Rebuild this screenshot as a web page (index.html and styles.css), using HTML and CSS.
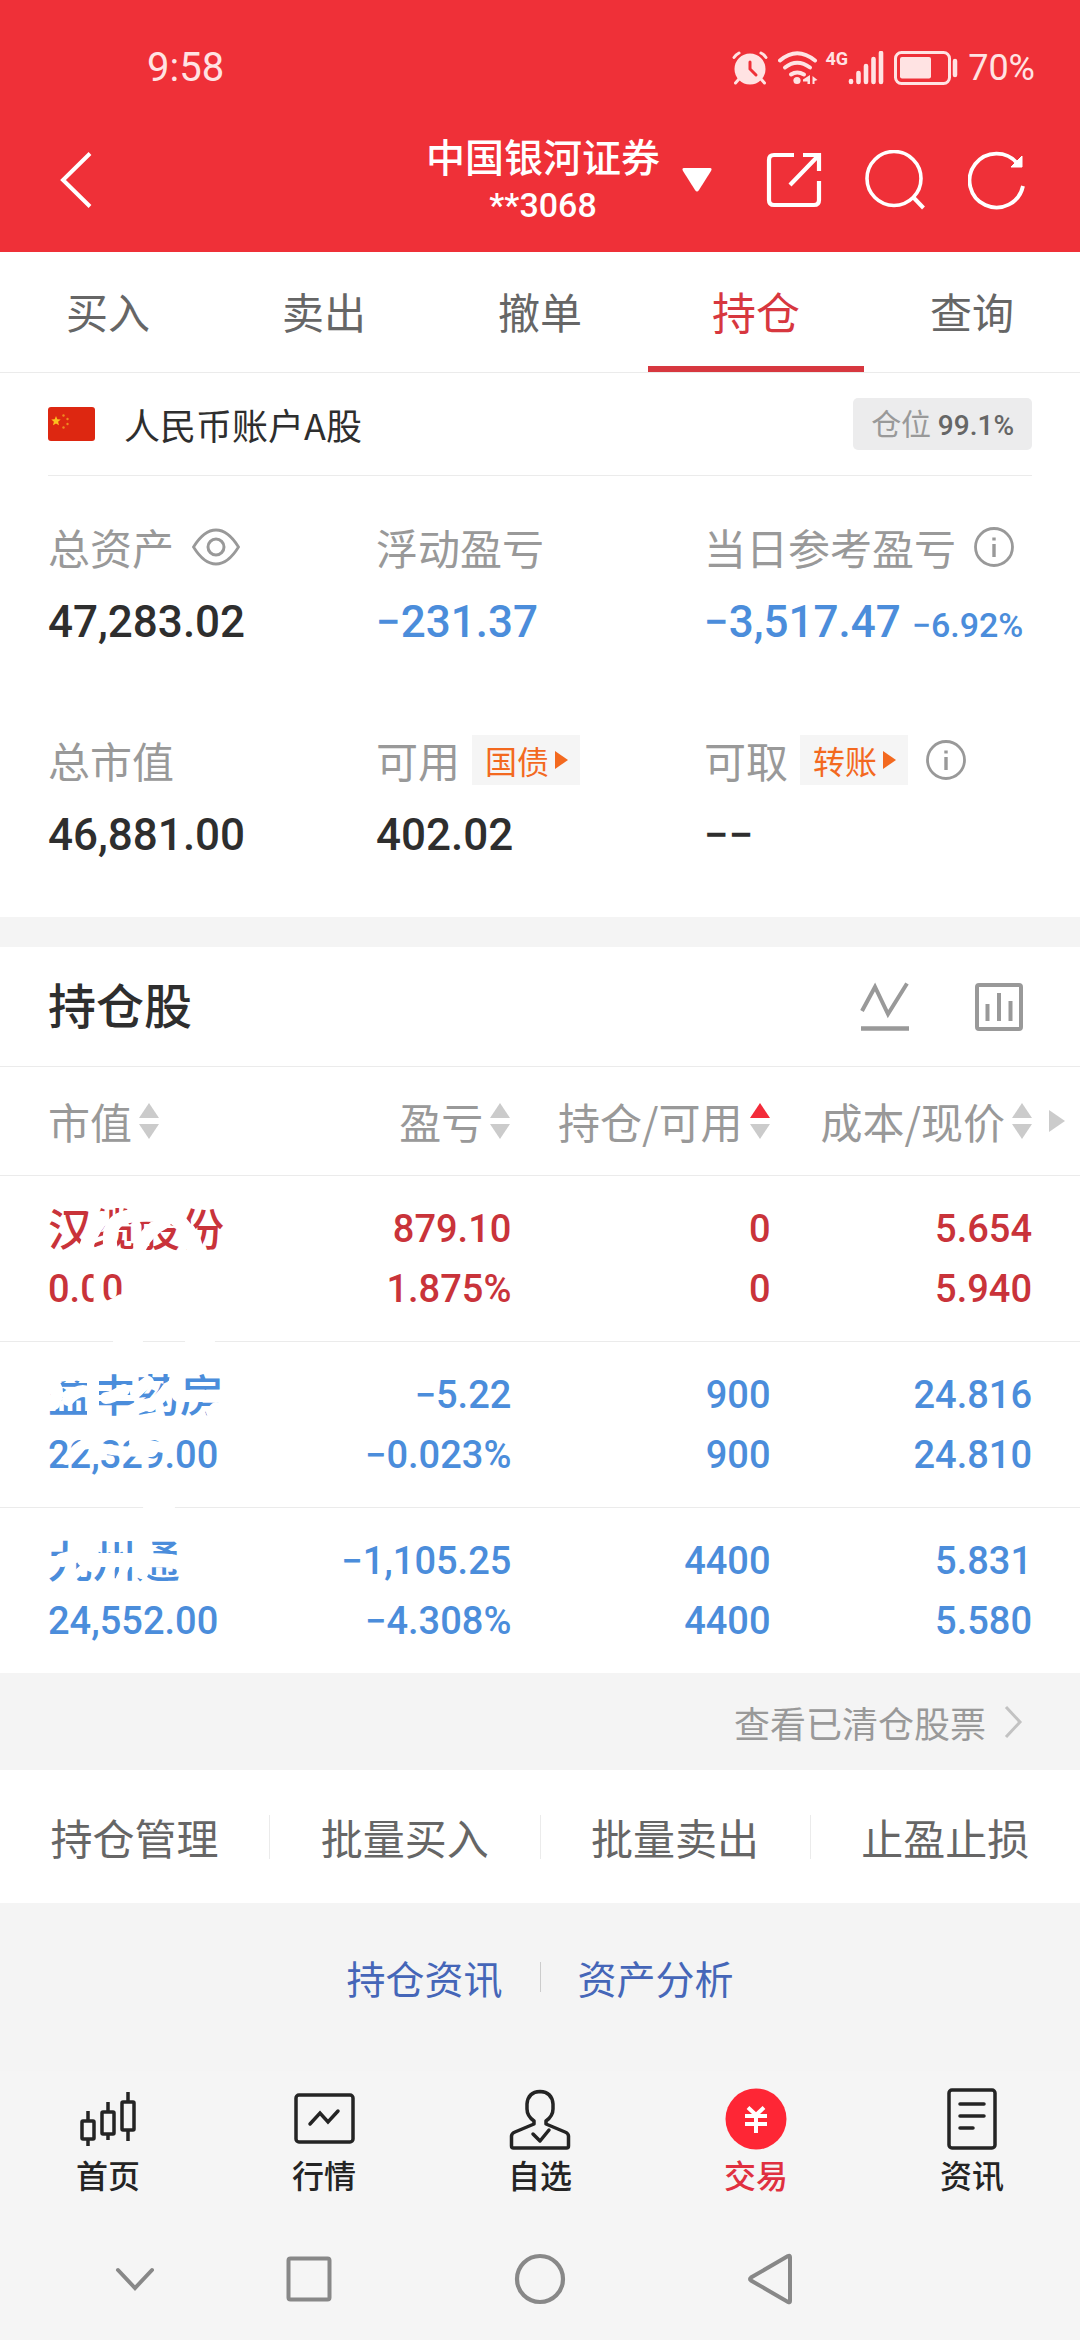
FILE: index.html
```html
<!DOCTYPE html>
<html lang="zh-CN">
<head>
<meta charset="utf-8">
<meta name="viewport" content="width=device-width, initial-scale=1">
<title>持仓</title>
<link rel="stylesheet" href="styles.css">
</head>
<body>
<header class="top">
  <div class="status">
    <span class="status-time num">9:58</span>
    <div class="status-icons">
      <svg width="36" height="34" viewBox="0 0 36 34"><circle cx="18" cy="18" r="15.500" fill="currentColor"/><path d="M2 6.500Q4 3.500 7 2M34 6.500Q32 3.500 29 2M7 28l-3.500 4M29 28l3.500 4" fill="none" stroke="currentColor" stroke-width="3" stroke-linecap="round"/><path d="M18 11v7l6 6" fill="none" stroke="#ef3038" stroke-width="3" stroke-linecap="round"/></svg>
      <svg class="wifi" width="40" height="34" viewBox="0 0 40 34"><g fill="none" stroke="currentColor" stroke-width="4" stroke-linecap="round"><path d="M2 9.500Q19-5 37 9.500"/><path d="M7 16.500Q19 7 32 16.500"/><path d="M13 23.500Q19 19.500 26 23.500"/></g><circle cx="19" cy="29.500" r="3.600" fill="currentColor"/><path d="M32 24v9h-2.500v-2.500h-4.500v-2zM34.500 25l5 4-3 1v3h-2z" fill="currentColor"/></svg>
      <div class="signal"><span class="signal-net num">4G</span><svg width="36" height="34" viewBox="0 0 36 34"><path d="M3 30v1M10.500 22v9M18 15v16M25.500 8v23M33 2v29" fill="none" stroke="currentColor" stroke-width="4.600" stroke-linecap="round"/></svg></div>
      <svg class="battery" width="64" height="34" viewBox="0 0 64 34"><rect x="1.500" y="1.500" width="54" height="31" rx="6" fill="none" stroke="currentColor" stroke-width="3"/><rect x="6" y="6" width="31" height="21.500" rx="2" fill="currentColor"/><path d="M61 10v14" stroke="currentColor" stroke-width="4.500" stroke-linecap="round"/></svg>
      <span class="status-pct num">70%</span>
    </div>
  </div>
  <div class="bar">
    <button class="icon-btn" type="button" aria-label="返回"><svg width="32" height="56" viewBox="0 0 32 56"><path d="M30 1.500L3 28l27 26.500" fill="none" stroke="currentColor" stroke-width="4"/></svg></button>
    <div class="bar-title"><h1 class="broker">中国银河证券</h1><span class="acct num">**3068</span></div>
    <div class="bar-right">
      <button class="icon-btn" type="button" aria-label="切换账户"><svg width="30" height="26" viewBox="0 0 30 26"><path d="M2 1h26q2.500 0 1 3L17 23q-2 3-4 0L1 4q-1.500-3 1-3z" fill="currentColor"/></svg></button>
      <div class="bar-actions">
        <button class="icon-btn" type="button" aria-label="分享"><svg width="56" height="56" viewBox="0 0 56 56"><path d="M28 3H8Q3 3 3 8v40q0 5 5 5h40q5 0 5-5V29M37 3h16v16M53 3L24 33" fill="none" stroke="currentColor" stroke-width="4.200"/></svg></button>
        <button class="icon-btn" type="button" aria-label="搜索"><svg width="60" height="60" viewBox="0 0 60 60"><circle cx="29" cy="28.500" r="27" fill="none" stroke="currentColor" stroke-width="3.600"/><path d="M48 47l10.500 11" stroke="currentColor" stroke-width="4"/></svg></button>
        <button class="icon-btn" type="button" aria-label="刷新"><svg width="58" height="60" viewBox="0 0 58 60"><path d="M49.500 13.500A27 27 0 1 0 55 36" fill="none" stroke="currentColor" stroke-width="3.800"/><path d="M54 6v11H43z" fill="currentColor" stroke="currentColor"/></svg></button>
      </div>
    </div>
  </div>
</header>

<nav class="tabs">
  <a class="tab" href="#buy">买入</a>
  <a class="tab" href="#sell">卖出</a>
  <a class="tab" href="#cancel">撤单</a>
  <a class="tab tab-on" href="#hold">持仓</a>
  <a class="tab" href="#query">查询</a>
</nav>

<main>
  <section class="assets">
    <div class="account">
      <svg class="flag" width="47" height="34" viewBox="0 0 47 34"><rect width="47" height="34" rx="3" fill="#dd2711"/><path d="M8 9l1.300 3.300 3.400.2-2.600 2.300.9 3.500L8 16.500l-3 1.800.9-3.500-2.600-2.300 3.400-.2z" fill="#fbc11f"/><g fill="#ee8a20"><circle cx="15.500" cy="8.500" r="1.200"/><circle cx="19.500" cy="12" r="1.200"/><circle cx="19.500" cy="17" r="1.200"/><circle cx="15.500" cy="20.500" r="1.200"/></g></svg>
      <h2 class="account-name">人民币账户A股</h2>
      <span class="ratio">仓位 <b class="ratio-num num">99.1%</b></span>
    </div>
    <dl class="figures">
      <div class="figure">
        <dt class="label">总资产<button class="icon-btn" type="button" aria-label="隐藏金额"><svg width="48" height="38" viewBox="0 0 48 38"><path d="M1.500 19Q12 2 24 2t22.500 17Q36 36 24 36T1.500 19z" fill="none" stroke="currentColor" stroke-width="2.800"/><circle cx="24" cy="19" r="8" fill="none" stroke="currentColor" stroke-width="3"/></svg></button></dt>
        <dd class="value num">47,283.02</dd>
      </div>
      <div class="figure">
        <dt class="label">浮动盈亏</dt>
        <dd class="value num down">−231.37</dd>
      </div>
      <div class="figure">
        <dt class="label">当日参考盈亏<button class="icon-btn" type="button" aria-label="说明"><svg width="40" height="40" viewBox="0 0 40 40"><circle cx="20" cy="20" r="18.500" fill="none" stroke="currentColor" stroke-width="2.800"/><path d="M20 17v13M20 10.500v3" stroke="currentColor" stroke-width="3.400"/></svg></button></dt>
        <dd class="value num down">−3,517.47 <small class="value-pct">−6.92%</small></dd>
      </div>
      <div class="figure">
        <dt class="label">总市值</dt>
        <dd class="value num">46,881.00</dd>
      </div>
      <div class="figure">
        <dt class="label">可用<button class="chip" type="button">国债<svg width="13" height="20" viewBox="0 0 13 20"><path d="M0 1l13 9L0 19z" fill="currentColor"/></svg></button></dt>
        <dd class="value num">402.02</dd>
      </div>
      <div class="figure">
        <dt class="label">可取<button class="chip" type="button">转账<svg width="13" height="20" viewBox="0 0 13 20"><path d="M0 1l13 9L0 19z" fill="currentColor"/></svg></button><button class="icon-btn" type="button" aria-label="说明"><svg width="40" height="40" viewBox="0 0 40 40"><circle cx="20" cy="20" r="18.500" fill="none" stroke="currentColor" stroke-width="2.800"/><path d="M20 17v13M20 10.500v3" stroke="currentColor" stroke-width="3.400"/></svg></button></dt>
        <dd class="value num">−−</dd>
      </div>
    </dl>
  </section>

  <section class="holdings">
    <div class="holdings-head">
      <h2 class="holdings-title">持仓股</h2>
      <div class="holdings-tools">
        <button class="icon-btn" type="button" aria-label="走势"><svg width="50" height="50" viewBox="0 0 50 50"><path d="M2 29L15 5l13 27L47 1.500" fill="none" stroke="currentColor" stroke-width="4"/><path d="M1 46.500h48" stroke="currentColor" stroke-width="4.500"/></svg></button>
        <button class="icon-btn" type="button" aria-label="图表"><svg width="50" height="50" viewBox="0 0 50 50"><rect x="3" y="3" width="44" height="44" rx="2" fill="none" stroke="currentColor" stroke-width="4"/><path d="M13.500 22v17M25 11v28M36.500 19v20" stroke="currentColor" stroke-width="4"/></svg></button>
      </div>
    </div>
    <div class="table-wrap">
      <table class="stocks">
        <colgroup><col class="col-name"><col class="col-mid"><col class="col-mid"><col class="col-cost"></colgroup>
        <thead>
          <tr>
            <th scope="col"><button class="sort" type="button">市值<svg width="22" height="36" viewBox="0 0 22 36"><path d="M11 0l10 15H1z"/><path d="M11 36L1 21h20z"/></svg></button></th>
            <th scope="col"><button class="sort" type="button">盈亏<svg width="22" height="36" viewBox="0 0 22 36"><path d="M11 0l10 15H1z"/><path d="M11 36L1 21h20z"/></svg></button></th>
            <th scope="col"><button class="sort" type="button">持仓/可用<svg width="22" height="36" viewBox="0 0 22 36"><path class="sort-on" d="M11 0l10 15H1z"/><path d="M11 36L1 21h20z"/></svg></button></th>
            <th scope="col" class="th-cost"><button class="sort" type="button">成本/现价<svg width="22" height="36" viewBox="0 0 22 36"><path d="M11 0l10 15H1z"/><path d="M11 36L1 21h20z"/></svg></button><svg class="more" width="16" height="22" viewBox="0 0 16 22"><path d="M0 0l16 11L0 22z"/></svg></th>
          </tr>
        </thead>
        <tbody>
          <tr class="up">
            <td><span class="name">汉缆股份</span><span class="num">0.00</span></td>
            <td><span class="num">879.10</span><span class="num">1.875%</span></td>
            <td><span class="num">0</span><span class="num">0</span></td>
            <td><span class="num">5.654</span><span class="num">5.940</span></td>
          </tr>
          <tr class="down">
            <td><span class="name">益丰药房</span><span class="num">22,329.00</span></td>
            <td><span class="num">−5.22</span><span class="num">−0.023%</span></td>
            <td><span class="num">900</span><span class="num">900</span></td>
            <td><span class="num">24.816</span><span class="num">24.810</span></td>
          </tr>
          <tr class="down">
            <td><span class="name">九州通</span><span class="num">24,552.00</span></td>
            <td><span class="num">−1,105.25</span><span class="num">−4.308%</span></td>
            <td><span class="num">4400</span><span class="num">4400</span></td>
            <td><span class="num">5.831</span><span class="num">5.580</span></td>
          </tr>
        </tbody>
      </table>
      <!-- white marker strokes that hide the stock names -->
      <svg class="marker" width="240" height="420" viewBox="0 0 240 420" aria-hidden="true">
        <g fill="none" stroke="#fff" stroke-linecap="round" stroke-linejoin="round">
          <path stroke-width="14" d="M84 78Q88 60 102 42M112 78Q106 56 116 46T170 40Q188 46 194 76M140 70Q148 54 164 46M188 54Q194 62 196 72"/>
          <path stroke-width="7" d="M97 100v34M108 128Q114 126 120 122M138 50v16"/>
          <path stroke-width="10" d="M118 165h20M190 165h20"/>
          <path stroke-width="12" d="M54 208Q60 216 54 228M60 200Q72 197 84 200M68 224Q78 212 88 216M93 198v44M124 214Q112 222 106 222M136 216Q142 210 148 206M168 212Q162 222 150 230M176 200Q172 212 178 220H220M126 238Q138 230 150 228M212 236L216 232"/>
          <path stroke-width="10" d="M74 276Q84 264 96 270T152 276M66 284L84 268M134 266L164 272M148 332h22"/>
          <path stroke-width="14" d="M84 366Q84 380 62 384M84 384Q120 384 150 384T182 390M144 366Q150 376 142 396M94 364Q92 374 90 384"/>
          <path stroke-width="8" d="M88 388L72 402M112 390L106 402M126 390L120 402"/>
        </g>
      </svg>
    </div>
  </section>

  <a class="cleared" href="#cleared">查看已清仓股票<svg width="20" height="34" viewBox="0 0 20 34"><path d="M2 2l14 15L2 32" fill="none" stroke="#c2c2c2" stroke-width="3"/></svg></a>

  <div class="actions">
    <button class="action" type="button">持仓管理</button>
    <button class="action" type="button">批量买入</button>
    <button class="action" type="button">批量卖出</button>
    <button class="action" type="button">止盈止损</button>
  </div>

  <div class="links">
    <a class="link" href="#news">持仓资讯</a>
    <a class="link" href="#analysis">资产分析</a>
  </div>
</main>

<footer class="bottom">
  <nav class="dock">
    <a class="dock-item" href="#home"><svg width="64" height="64" viewBox="0 0 64 64"><g fill="none" stroke="currentColor" stroke-width="3.500"><rect x="6" y="34" width="12" height="18" rx="1"/><path d="M12 24v10M12 52v7"/><rect x="26" y="25" width="12" height="22" rx="1"/><path d="M32 15v10M32 47v6"/><rect x="46" y="15" width="12" height="28" rx="1"/><path d="M52 5v10M52 43v11"/></g></svg>首页</a>
    <a class="dock-item" href="#quotes"><svg width="64" height="64" viewBox="0 0 64 64"><g fill="none" stroke="currentColor" stroke-width="3.500"><rect x="4" y="8" width="57" height="47" rx="3"/><path d="M18 37l10-11 8 9 10-11" stroke-linecap="round"/></g></svg>行情</a>
    <a class="dock-item" href="#picks"><svg width="64" height="64" viewBox="0 0 64 64"><g fill="none" stroke="currentColor" stroke-width="3.500" stroke-linejoin="round"><path d="M26 34Q19 29 19 22v-5Q20 5 32 4.500 44 5 45 17v5q0 7-7 12v3l19 8q3.500 1.500 3.500 4v10q0 2-2 2h-53q-2 0-2-2V49q0-2.500 3.500-4L26 37z"/><path d="M25 47l7 7 9-11" stroke-linecap="round"/></g></svg>自选</a>
    <a class="dock-item dock-on" href="#trade"><svg width="64" height="64" viewBox="0 0 64 64"><circle cx="32" cy="32" r="30.500" fill="#fe2635"/><path d="M24 20.500l8 7.500 8-7.500M21 29h22M21 37h22M32 28v18" fill="none" stroke="#fff" stroke-width="4"/></svg>交易</a>
    <a class="dock-item" href="#info"><svg width="64" height="64" viewBox="0 0 64 64"><g fill="none" stroke="currentColor" stroke-width="3.500"><rect x="9" y="3" width="46" height="58" rx="3"/><path d="M20 17h24M20 29h24M20 41h13" stroke-linecap="round"/></g></svg>资讯</a>
  </nav>
  <div class="sysnav">
    <button class="icon-btn" type="button" aria-label="收起"><svg width="40" height="52" viewBox="0 0 40 52"><path d="M3 17l17 18 17-18" fill="none" stroke="currentColor" stroke-width="4" stroke-linecap="round"/></svg></button>
    <button class="icon-btn" type="button" aria-label="多任务"><svg width="46" height="52" viewBox="0 0 46 52"><rect x="2.500" y="5.500" width="41" height="41" rx="2" fill="none" stroke="currentColor" stroke-width="4"/></svg></button>
    <button class="icon-btn" type="button" aria-label="主屏幕"><svg width="52" height="52" viewBox="0 0 52 52"><circle cx="26" cy="26" r="23" fill="none" stroke="currentColor" stroke-width="4.200"/></svg></button>
    <button class="icon-btn" type="button" aria-label="返回"><svg width="46" height="52" viewBox="0 0 46 52"><path d="M41 3L4 24.500q-2 1.500 0 3L41 49q2 1 2-1V4q0-2-2-1z" fill="none" stroke="currentColor" stroke-width="4"/></svg></button>
  </div>
</footer>
</body>
</html>
```
FILE: styles.css
```css
* { box-sizing: border-box; }

body {
  margin: 0;
  min-height: 100vh;
  display: flex;
  flex-direction: column;
  background: #f4f4f4;
  color: #2e2e2e;
  font-family: "Noto Sans CJK SC", "Noto Sans", sans-serif;
  font-size: 42px;
  line-height: 60px;
}

h1, h2, dl, dd { margin: 0; }
h1, h2 { font-weight: 500; }
a { color: inherit; text-decoration: none; }
svg { display: block; flex: none; }

button {
  padding: 0;
  border: 0;
  background: none;
  color: inherit;
  font: inherit;
}

.icon-btn { display: flex; }
.num { font-family: Roboto, "Noto Sans CJK SC", sans-serif; font-weight: 500; }
.up { color: #c9333a; }
.down { color: #4b8ddb; }

/* header */
.top { background: #ef3038; color: #fff; }

.status {
  height: 108px;
  padding: 28px 45px 0 147px;
  display: flex;
  align-items: center;
  justify-content: space-between;
  color: #ffe3e3;
}
.status-time { font-size: 40px; font-weight: 400; }
.status-icons { display: flex; align-items: center; }
.wifi { margin-left: 10px; }
.signal { display: flex; margin-left: 8px; }
.signal-net { font-size: 18px; line-height: 16px; font-weight: 700; }
.battery { margin-left: 10px; }
.status-pct { margin-left: 10px; font-size: 36px; font-weight: 400; }

.bar {
  height: 144px;
  padding: 0 54px 0 60px;
  display: grid;
  grid-template-columns: 1fr auto 1fr;
  align-items: center;
}
.bar-title { display: flex; flex-direction: column; text-align: center; }
.broker { font-size: 39px; line-height: 50px; }
.acct { font-size: 34px; line-height: 50px; }
.bar-right { display: flex; align-items: center; justify-content: space-between; padding-left: 22px; }
.bar-actions { display: flex; align-items: center; gap: 43px; }

/* tabs */
.tabs {
  display: flex;
  height: 121px;
  background: #fff;
  border-bottom: 1px solid #ebebeb;
  color: #666;
}
.tab {
  flex: 1;
  text-align: center;
  line-height: 118px;
  border-bottom: 6px solid transparent;
}
.tab-on { color: #d7373f; border-color: #d7373f; font-size: 44px; }

/* asset summary */
.assets { background: #fff; padding: 0 48px; }
.account {
  height: 103px;
  display: flex;
  align-items: center;
  border-bottom: 1px solid #ebebeb;
}
.account-name { margin-left: 29px; font-size: 36px; font-weight: 400; }
.ratio {
  margin-left: auto;
  padding: 0 18px;
  border-radius: 5px;
  background: #ececed;
  color: #999;
  font-size: 30px;
  line-height: 48px;
}
.ratio-num { color: #666; font-size: 28px; }

.figures {
  display: grid;
  grid-template-columns: repeat(3, 1fr);
  row-gap: 63px;
  padding: 39px 0 39px;
}
.label { display: flex; align-items: center; gap: 18px; height: 64px; color: #999; white-space: nowrap; }
.value { height: 86px; font-size: 44px; line-height: 86px; white-space: nowrap; }
.value-pct { font-size: 34px; }
.chip {
  display: flex;
  align-items: center;
  gap: 6px;
  height: 50px;
  margin-left: -6px;
  padding: 0 12px 0 13px;
  background: #f5f5f5;
  color: #f3691f;
  font-size: 32px;
}

/* holdings */
.holdings { margin-top: 30px; background: #fff; }
.holdings-head {
  height: 120px;
  padding: 0 56px 0 48px;
  display: flex;
  align-items: center;
  justify-content: space-between;
  border-bottom: 1px solid #ebebeb;
}
.holdings-title { padding-bottom: 8px; font-size: 48px; }
.holdings-tools { display: flex; gap: 64px; color: #999; }

.table-wrap { position: relative; }
.stocks { width: 100%; table-layout: fixed; border-spacing: 0; }
.col-name, .col-mid { width: 24%; }
.stocks th {
  height: 109px;
  padding: 0 7px 6px 0;
  border-bottom: 1px solid #ebebeb;
  color: #999;
  font-weight: 400;
  text-align: right;
  white-space: nowrap;
}
.stocks th:first-child, .stocks td:first-child { padding-left: 48px; text-align: left; }
.sort { display: inline-flex; align-items: center; gap: 6px; vertical-align: middle; fill: #cbcbcb; }
.sort-on { fill: #f32b3a; }
.stocks .th-cost { padding-right: 15px; }
.more { display: inline-block; margin-left: 16px; vertical-align: middle; fill: #cbcbcb; }
.stocks td {
  padding: 23px 7px 22px 0;
  border-bottom: 1px solid #ebebeb;
  font-size: 38px;
  text-align: right;
}
.stocks td:last-child { padding-right: 48px; }
.stocks tbody tr:last-child td { border-bottom: 0; }
.stocks td span { display: block; }
.stocks .name { height: 60px; font-size: 44px; font-weight: 500; line-height: 56px; }
.marker { position: absolute; left: 0; top: 109px; }

.cleared {
  display: flex;
  align-items: center;
  justify-content: flex-end;
  gap: 18px;
  height: 97px;
  padding-right: 56px;
  color: #999;
  font-size: 36px;
}

.actions {
  display: flex;
  align-items: center;
  height: 133px;
  background: #fff;
  color: #666;
}
.action { flex: 1; line-height: 44px; }
.action + .action { border-left: 1px solid #ebebeb; }

.links {
  display: flex;
  justify-content: center;
  padding-top: 59px;
  color: #4566b8;
  font-size: 39px;
  line-height: 30px;
}
.link { padding: 0 37px; }
.link + .link { border-left: 1px solid #ccc; }

/* bottom bars */
.bottom { margin-top: auto; background: #f5f5f5; }
.dock { display: flex; padding: 16px 0 24px; }
.dock-item {
  flex: 1;
  display: flex;
  flex-direction: column;
  align-items: center;
  gap: 3px;
  color: #242424;
  font-size: 32px;
  font-weight: 500;
  line-height: 40px;
}
.dock-on { color: #e03040; }
.sysnav {
  display: grid;
  grid-template-columns: 270fr 78fr 384fr 76fr 272fr;
  align-items: center;
  justify-items: center;
  height: 122px;
  color: #888;
}
```
